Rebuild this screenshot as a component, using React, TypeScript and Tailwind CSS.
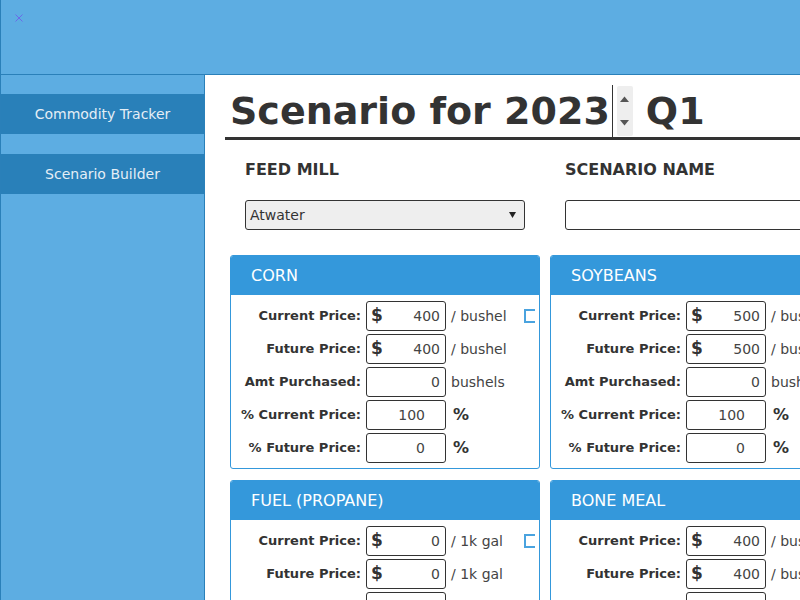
import React from "react";

type Row = {
  label: string;
  value: string;
  dollar?: boolean;
  unit: string;
  pct?: boolean;
};

type Commodity = {
  name: string;
  price: string;
  unit: string;
  plural: string;
};

const commodities: Commodity[] = [
  { name: "Corn", price: "400", unit: "/ bushel", plural: "bushels" },
  { name: "Soybeans", price: "500", unit: "/ bushel", plural: "bushels" },
  { name: "Fuel (Propane)", price: "0", unit: "/ 1k gal", plural: "gal" },
  { name: "Bone Meal", price: "400", unit: "/ bushel", plural: "bushels" },
];

function rowsFor(c: Commodity): Row[] {
  return [
    { label: "Current Price:", value: c.price, dollar: true, unit: c.unit },
    { label: "Future Price:", value: c.price, dollar: true, unit: c.unit },
    { label: "Amt Purchased:", value: "0", unit: c.plural },
    { label: "% Current Price:", value: "100", unit: "%", pct: true },
    { label: "% Future Price:", value: "0", unit: "%", pct: true },
  ];
}

function CommodityCard({ c }: { c: Commodity }) {
  return (
    <div className="border border-[#3498db] rounded-[3px] overflow-hidden bg-white">
      {/* Card header */}
      <div className="h-[39px] bg-[#3498db] text-white text-[16px] pl-5 flex items-center uppercase">
        {c.name}
      </div>

      {/* Inputs */}
      <div className="pt-[6px] pb-[5px] flex flex-col gap-[3px]">
        {rowsFor(c).map((r, i) => (
          <div key={r.label} className="flex items-center h-[30px]">
            <span className="w-[130px] text-right text-[13px] font-bold text-[#333] shrink-0">
              {r.label}
            </span>
            <div className="ml-[5px] w-[80px] h-[30px] shrink-0 border border-[#333] rounded-[3px] flex items-center">
              {r.dollar && (
                <span className="pl-[4px] text-[17px] text-[#333] font-semibold">$</span>
              )}
              <span
                className={
                  r.pct
                    ? "ml-auto pr-[20px] text-[14px] text-[#444]"
                    : "ml-auto pr-[5px] text-[14px] text-[#444]"
                }
              >
                {r.value}
              </span>
            </div>
            {r.pct ? (
              <span className="ml-[7px] text-[16px] font-bold text-[#333]">%</span>
            ) : (
              <span className="ml-[5px] text-[14px] text-[#444] whitespace-nowrap">{r.unit}</span>
            )}
            {i === 0 && (
              <span className="ml-auto mr-[4px] w-[11px] h-[14px] border-2 border-r-0 border-[#4aa3df] shrink-0" />
            )}
          </div>
        ))}
      </div>
    </div>
  );
}

export default function App() {
  return (
    <div
      className="w-[800px] h-[600px] overflow-hidden flex flex-col border-l border-[#2a80b9] text-[#333]"
      style={{ fontFamily: '"DejaVu Sans", sans-serif' }}
    >
      {/* Top bar */}
      <header className="h-[75px] shrink-0 bg-[#5dade2] border-b border-[#2a80b9] pl-[14px] pt-[14px]">
        <svg width="8" height="8" viewBox="0 0 8 8">
          <path d="M0.5 0.5 L7.5 7.5 M7.5 0.5 L0.5 7.5" stroke="#6a6ae8" strokeWidth="1" />
        </svg>
      </header>

      <div className="flex flex-1 min-h-0">
        {/* Sidebar */}
        <aside className="w-[204px] shrink-0 bg-[#5dade2] border-r border-[#2a80b9] pt-[19px] flex flex-col gap-5">
          <div className="h-10 bg-[#2980b9] text-[#e4eef6] text-[14px] flex items-center justify-center">
            Commodity Tracker
          </div>
          <div className="h-10 bg-[#2980b9] text-[#e4eef6] text-[14px] flex items-center justify-center">
            Scenario Builder
          </div>
        </aside>

        {/* Main */}
        <main className="flex-1 min-w-0 overflow-hidden bg-white pl-5 pt-[10px]">
          {/* Title */}
          <div className="w-[700px] border-b-[3px] border-[#333] pl-[5px] h-[55px] flex items-center">
            <h1 className="text-[38px] font-bold text-[#333] leading-none flex items-center whitespace-nowrap">
              <span>Scenario for&nbsp;</span>
              <span className="h-[52px] flex items-center border-r border-[#333] pr-[2px]">2023</span>
              <span className="ml-[4px] w-[16px] h-[50px] bg-[#eee] rounded-[2px] flex flex-col items-center justify-between py-[10px]">
                <svg width="9" height="6" viewBox="0 0 9 6">
                  <path d="M0 6 L4.5 0.5 L9 6 Z" fill="#555" />
                </svg>
                <svg width="9" height="6" viewBox="0 0 9 6">
                  <path d="M0 0 L4.5 5.5 L9 0 Z" fill="#555" />
                </svg>
              </span>
              <span className="ml-[13px]">Q1</span>
            </h1>
          </div>

          {/* Form + cards */}
          <div className="pl-[5px] grid grid-cols-[310px_310px] gap-x-[10px] gap-y-[11px]">
            <div className="pl-[15px] pt-[20px]">
              <div className="text-[16px] font-bold leading-5 h-5">FEED MILL</div>
              <div className="mt-5 w-[280px] h-[30px] bg-[#eee] border border-[#333] rounded-[3px] flex items-center pl-[4px] pr-[8px] text-[14px] text-[#333]">
                <span>Atwater</span>
                <svg className="ml-auto" width="7" height="6" viewBox="0 0 7 6">
                  <path d="M0 0 L7 0 L3.5 6 Z" fill="#222" />
                </svg>
              </div>
            </div>
            <div className="pl-[15px] pt-[20px]">
              <div className="text-[16px] font-bold leading-5 h-5 whitespace-nowrap">SCENARIO NAME</div>
              <div className="mt-5 w-[280px] h-[30px] bg-white border border-[#333] rounded-[3px]" />
            </div>

            <div className="col-span-2 h-[3px]" />

            {commodities.map((c) => (
              <CommodityCard key={c.name} c={c} />
            ))}
          </div>
        </main>
      </div>
    </div>
  );
}
